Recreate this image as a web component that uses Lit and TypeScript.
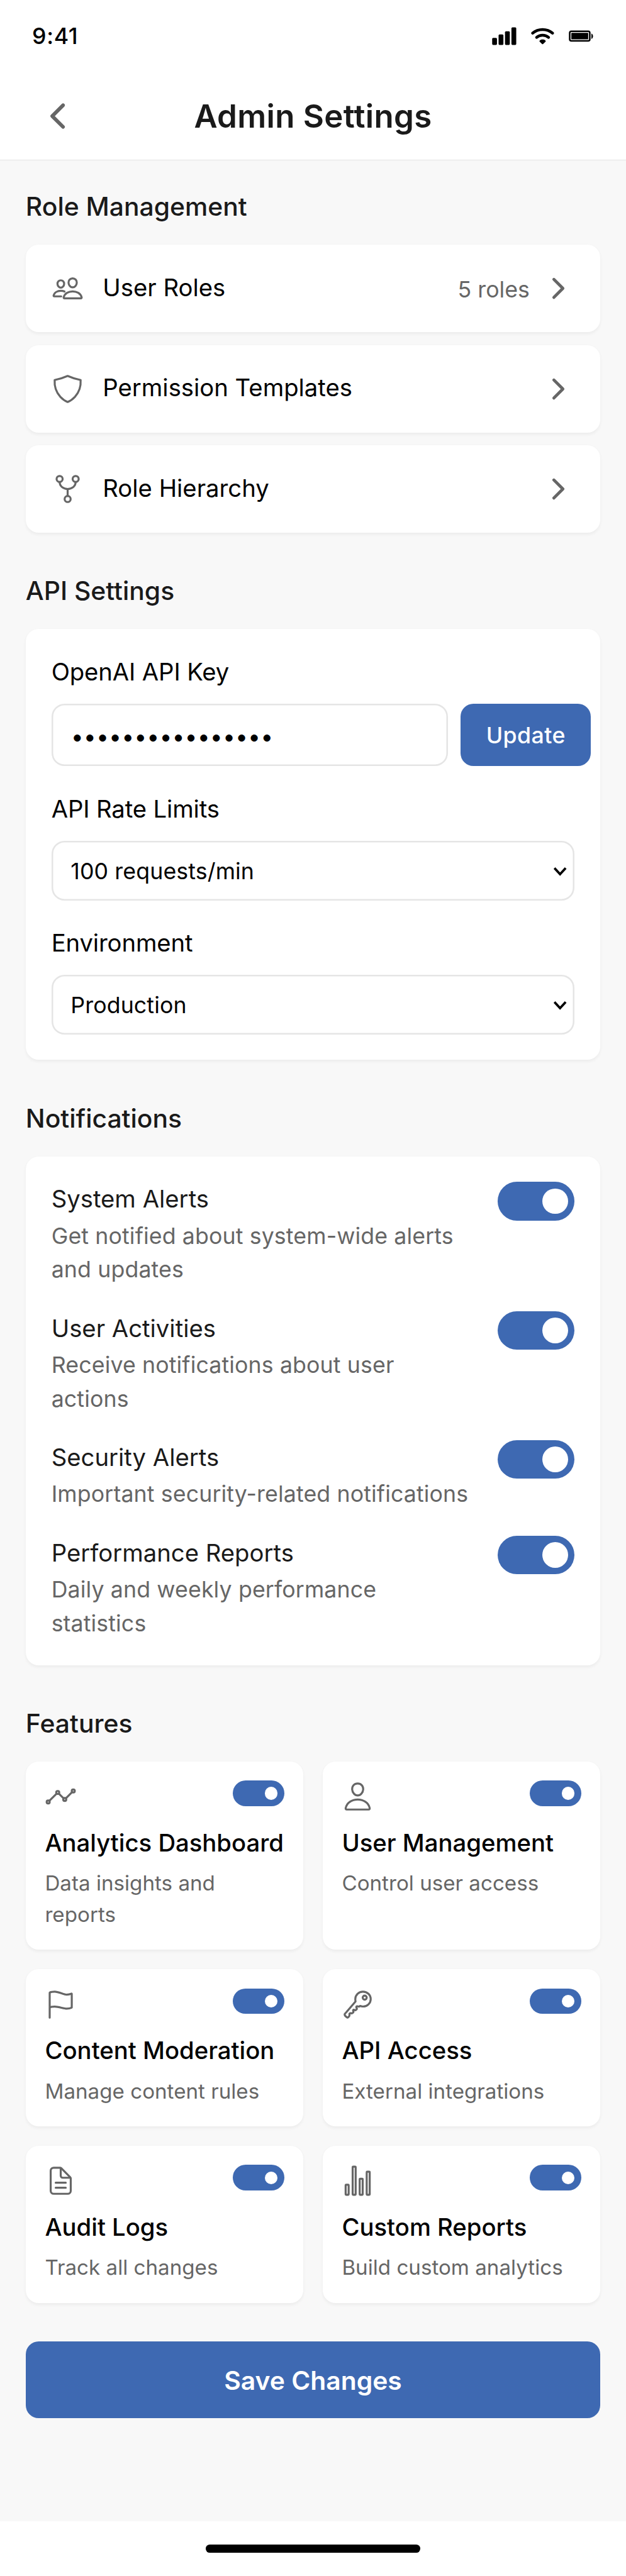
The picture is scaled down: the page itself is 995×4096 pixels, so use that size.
import { LitElement, html, svg, css, TemplateResult } from "lit";
import { customElement, property } from "lit/decorators.js";

const ICONS: Record<string, TemplateResult> = {
  back: svg`<path stroke-width="48" d="M328 112L184 256l144 144"/>`,
  forward: svg`<path stroke-width="48" d="M184 112l144 144-144 144"/>`,
  people: svg`<path d="M402 168c-2.93 40.67-33.1 72-66 72s-63.12-31.32-66-72c-3-42.31 26.37-72 66-72s69 30.46 66 72z"/><path d="M336 304c-65.17 0-127.84 32.37-143.54 95.41-2.08 8.34 3.15 16.59 11.72 16.59h263.65c8.57 0 13.77-8.25 11.72-16.59C463.85 335.36 401.18 304 336 304z"/><path d="M200 185.94c-2.34 32.48-26.72 58.06-53 58.06s-50.7-25.57-53-58.06C91.61 152.15 115.34 128 147 128s55.39 24.77 53 57.94z"/><path d="M206 306c-18.05-8.27-37.93-11.45-59-11.45-52 0-102.1 25.85-114.65 76.2-1.65 6.66 2.53 13.25 9.37 13.25H154"/>`,
  shield: svg`<path d="M463.1 112.37C373.68 96.33 336.71 84.45 256 48c-80.71 36.45-117.68 48.33-207.1 64.37C32.7 369.13 240.58 457.79 256 464c15.42-6.21 223.3-94.87 207.1-351.63z"/>`,
  network: svg`<circle cx="128" cy="96" r="48"/><circle cx="256" cy="416" r="48"/><circle cx="384" cy="96" r="48"/><path d="M128 144c0 74.67 68.92 112 128 112M384 144c0 74.67-68.92 112-128 112M256 368V256"/>`,
  analytics: svg`<path d="M344 280l88-88M232 216l64 64M80 320l104-104"/><circle cx="456" cy="168" r="24"/><circle cx="320" cy="304" r="24"/><circle cx="208" cy="192" r="24"/><circle cx="56" cy="344" r="24"/>`,
  person: svg`<path d="M344 144c-3.92 52.87-44 96-88 96s-84.15-43.12-88-96c-4-55 35-96 88-96s92 42 88 96z"/><path d="M256 304c-87 0-175.3 48-191.64 138.6C62.39 453.52 68.57 464 80 464h352c11.44 0 17.62-10.48 15.65-21.4C431.3 352 343 304 256 304z"/>`,
  flag: svg`<path d="M80 464V68.14a8 8 0 014-6.9C91.81 56.66 112.92 48 160 48c64 0 145 48 192 48a199.53 199.53 0 0077.23-15.77 2 2 0 012.77 1.85v219.36a4 4 0 01-2.39 3.65C421.37 308.7 392.33 320 352 320c-48 0-128-32-192-32s-80 16-80 16"/>`,
  key: svg`<path d="M218.1 167.17c0 13 0 25.6 4.1 37.4-43.1 50.6-156.9 184.3-167.5 194.5a20.17 20.17 0 00-6.7 15c0 8.5 5.2 16.7 9.6 21.3 6.6 6.9 34.8 33 40 28 15.4-15 18.5-19 24.8-25.2 9.5-9.3-1-28.3 2.3-36s6.8-9.2 12.5-10.4 15.8 2.9 23.7 3c8.3.1 12.8-3.4 19-9.2 5-4.6 8.6-8.9 8.7-15.6.2-9-12.8-20.9-3.1-30.4s23.7 6.2 34 5 22.8-15.5 24.1-21.6-11.7-21.8-9.7-30.7c.7-3 6.8-10 11.4-11s25 6.9 29.6 5.9c5.6-1.2 12.1-7.1 17.4-10.4 15.5 6.7 29.6 9.4 47.7 9.4 68.5 0 124-53.4 124-119.2S408.5 48 340 48s-121.9 53.37-121.9 119.17zM400 144a32 32 0 11-32-32 32 32 0 0132 32z"/>`,
  document: svg`<path d="M416 221.25V416a48 48 0 01-48 48H144a48 48 0 01-48-48V96a48 48 0 0148-48h98.75a32 32 0 0122.62 9.37l141.26 141.26a32 32 0 019.37 22.62z"/><path d="M256 56v120a32 32 0 0032 32h120M176 288h160M176 368h160"/>`,
  stats: svg`<rect x="64" y="320" width="48" height="160" rx="8"/><rect x="288" y="224" width="48" height="256" rx="8"/><rect x="400" y="112" width="48" height="368" rx="8"/><rect x="176" y="32" width="48" height="448" rx="8"/>`,
};

@customElement("line-icon")
export class LineIcon extends LitElement {
  @property() name = "";

  static styles = css`
    :host { display: block; flex: none; width: 20px; height: 20px; color: #666; }
    .glyph { display: block; width: 100%; height: 100%; fill: none; stroke: currentColor; stroke-width: 32; stroke-linecap: round; stroke-linejoin: round; }
  `;

  render() {
    return html`<svg class="glyph" viewBox="0 0 512 512">${ICONS[this.name]}</svg>`;
  }
}

@customElement("toggle-switch")
export class ToggleSwitch extends LitElement {
  @property({ type: Boolean, reflect: true }) small = false;

  static styles = css`
    :host { display: flex; flex: none; box-sizing: border-box; justify-content: flex-end; align-items: center; width: 48px; height: 24px; padding: 4px; border-radius: 12px; background: #3e69b2; }
    .knob { width: 16px; height: 16px; border-radius: 50%; background: #fff; }
    :host([small]) { width: 32px; height: 16px; border-radius: 8px; }
    :host([small]) .knob { width: 8px; height: 8px; }
  `;

  render() {
    return html`<span class="knob"></span>`;
  }
}

const ROLES = [
  { icon: "people", label: "User Roles", note: "5 roles" },
  { icon: "shield", label: "Permission Templates", note: "" },
  { icon: "network", label: "Role Hierarchy", note: "" },
];

const SELECTS = [
  { label: "API Rate Limits", value: "100 requests/min" },
  { label: "Environment", value: "Production" },
];

const NOTICES = [
  ["System Alerts", "Get notified about system-wide alerts and updates"],
  ["User Activities", "Receive notifications about user actions"],
  ["Security Alerts", "Important security-related notifications"],
  ["Performance Reports", "Daily and weekly performance statistics"],
];

const FEATURES = [
  ["analytics", "Analytics Dashboard", "Data insights and reports"],
  ["person", "User Management", "Control user access"],
  ["flag", "Content Moderation", "Manage content rules"],
  ["key", "API Access", "External integrations"],
  ["document", "Audit Logs", "Track all changes"],
  ["stats", "Custom Reports", "Build custom analytics"],
];

@customElement("app-root")
export class AppRoot extends LitElement {
  static styles = css`
    :host { display: block; background: #fff; }
    * { box-sizing: border-box; }
    .screen { zoom: 2.552; width: 389.9px; height: 1605px; display: flex; flex-direction: column; font: 400 15px/1.5 Inter, sans-serif; color: #000; background: #f8f8f8; }
    .status { display: flex; align-items: center; height: 45px; padding: 0 20px; gap: 8px; background: #fff; }
    .time { flex: 1; padding-top: 0.4px; font-size: 14px; font-weight: 500; letter-spacing: 0.25px; }
    .status-icon { display: block; width: 16px; height: 16px; }
    .header { display: grid; grid-template-columns: 56px 1fr 56px; align-items: center; height: 55.5px; padding-bottom: 1px; background: #fff; box-shadow: inset 0 -1px #f0f0f0; }
    .back { width: 24px; height: 24px; margin: 0.5px 0 0 24px; }
    .title { margin: 0.4px 0 0; text-align: center; font-size: 20px; font-weight: 600; letter-spacing: 0.12px; color: #1a1a1a; }
    .main { flex: 1; display: flex; flex-direction: column; gap: 24px; padding: 16px 16px 0; }
    .heading { margin: 0; padding: 0.4px 0 11.6px; font-size: 16px; line-height: 24px; font-weight: 500; color: #1a1a1a; }
    .card { background: #fff; border-radius: 8px; box-shadow: 0 1px 2px rgba(0, 0, 0, 0.05); }
    .roles { display: flex; flex-direction: column; gap: 8px; }
    .role { display: flex; align-items: center; height: 54.5px; padding: 0 16px; }
    .role-name { flex: 1; margin-left: 12px; padding-bottom: 0.9px; }
    .role-note { margin-right: 8px; padding-top: 1.4px; font-size: 14px; color: #666; }
    .form { display: flex; flex-direction: column; gap: 16px; padding: 16px; }
    .field { display: flex; flex-direction: column; gap: 8px; }
    .label { line-height: 22.5px; margin: -0.45px 0 0.45px; letter-spacing: -0.05px; }
    .key-row { display: flex; gap: 8px; margin-right: -10.2px; }
    .box { display: flex; align-items: center; box-shadow: inset 0 0 0 1px #e5e5e5; border-radius: 8px; font-size: 14px; letter-spacing: 0.04px; background: #fff; }
    .secret { flex: 1; height: 39px; padding: 2.4px 0 0 12.2px; letter-spacing: 0; }
    .update { display: flex; align-items: center; justify-content: center; width: 81.2px; height: 39px; padding-top: 1.2px; border-radius: 8px; background: #3e69b2; color: #fff; font-size: 14px; font-weight: 500; letter-spacing: 0.16px; }
    .select { height: 37px; padding: 1.2px 5px 0 12px; justify-content: space-between; }
    .caret { width: 8px; height: 8px; fill: none; stroke: #000; stroke-width: 1.45; }
    .notices { display: flex; flex-direction: column; gap: 16px; padding: 16px; }
    .notice { display: flex; justify-content: space-between; align-items: flex-start; }
    .notice-text { width: 262px; }
    .notice-name { color: #1a1a1a; line-height: 22.5px; margin-top: -0.45px; }
    .notice-desc { margin: 1.15px 0 -0.7px; font-size: 14px; line-height: 21px; letter-spacing: 0.045px; color: #666; }
    .features { display: grid; grid-template-columns: 1fr 1fr; gap: 12px; }
    .feature { padding: 12px; }
    .feature-head { display: flex; justify-content: space-between; align-items: flex-start; margin-bottom: 7.55px; }
    .feature-name { line-height: 22.5px; font-weight: 500; margin-bottom: 4.45px; white-space: nowrap; }
    .feature-desc { font-size: 13px; line-height: 19.5px; color: #666; }
    .save { display: flex; align-items: center; justify-content: center; height: 48px; padding-top: 0.8px; border-radius: 8px; background: #3e69b2; color: #fff; font-size: 16px; font-weight: 600; }
    .home { display: flex; align-items: center; justify-content: center; height: 34px; background: #fff; }
    .home-bar { width: 134px; height: 5px; border-radius: 2.5px; background: #000; }
  `;

  render() {
    return html`
      <div class="screen">
        <div class="status">
          <span class="time">9:41</span>
          <svg class="status-icon" viewBox="0 0 64 64">
            <rect x="2" y="36.3" width="12" height="17.7" rx="2.5"/><rect x="18" y="28" width="12" height="26" rx="2.5"/><rect x="34" y="20" width="12" height="34" rx="2.5"/><rect x="50" y="10" width="12" height="44" rx="2.5"/>
          </svg>
          <svg class="status-icon" viewBox="0 0 64 64">
            <path d="M7 24.6A39.2 39.2 0 0 1 57 24.6M17 35.2A24 24 0 0 1 47 35.2" fill="none" stroke="#000" stroke-width="7" stroke-linecap="round"/>
            <path d="M25 46.2C23.9 45 24 43.6 25.2 42.6C29 39.5 35 39.5 38.8 42.6C40 43.6 40.1 45 39 46.2L33.2 51.8Q32 52.8 30.8 51.8Z"/>
          </svg>
          <svg class="status-icon" viewBox="0 0 64 64">
            <rect x="4" y="20" width="50" height="24" rx="4" fill="none" stroke="#000" stroke-width="4"/><rect x="8" y="24" width="42" height="16" rx="1"/><path d="M58 25.3C63.3 28 63.3 36.3 58 39Z"/>
          </svg>
        </div>
        <header class="header">
          <line-icon class="back" name="back"></line-icon>
          <h1 class="title">Admin Settings</h1>
        </header>
        <main class="main">
          <section>
            <h2 class="heading">Role Management</h2>
            <div class="roles">
              ${ROLES.map((r) => html`
                <div class="card role">
                  <line-icon name=${r.icon}></line-icon>
                  <span class="role-name">${r.label}</span>
                  ${r.note ? html`<span class="role-note">${r.note}</span>` : ""}
                  <line-icon name="forward"></line-icon>
                </div>`)}
            </div>
          </section>
          <section>
            <h2 class="heading">API Settings</h2>
            <div class="card form">
              <div class="field">
                <span class="label">OpenAI API Key</span>
                <div class="key-row">
                  <span class="box secret">••••••••••••••••</span>
                  <span class="update">Update</span>
                </div>
              </div>
              ${SELECTS.map((s) => html`
                <div class="field">
                  <span class="label">${s.label}</span>
                  <div class="box select">
                    ${s.value}
                    <svg class="caret" viewBox="0 0 8 8"><path d="M.5 1.7L4 5.5L7.5 1.7"/></svg>
                  </div>
                </div>`)}
            </div>
          </section>
          <section>
            <h2 class="heading">Notifications</h2>
            <div class="card notices">
              ${NOTICES.map(([name, desc]) => html`
                <div class="notice">
                  <div class="notice-text">
                    <div class="notice-name">${name}</div>
                    <div class="notice-desc">${desc}</div>
                  </div>
                  <toggle-switch></toggle-switch>
                </div>`)}
            </div>
          </section>
          <section>
            <h2 class="heading">Features</h2>
            <div class="features">
              ${FEATURES.map(([icon, name, desc]) => html`
                <div class="card feature">
                  <div class="feature-head">
                    <line-icon name=${icon}></line-icon>
                    <toggle-switch small></toggle-switch>
                  </div>
                  <div class="feature-name">${name}</div>
                  <div class="feature-desc">${desc}</div>
                </div>`)}
            </div>
          </section>
          <div class="save">Save Changes</div>
        </main>
        <footer class="home"><div class="home-bar"></div></footer>
      </div>
    `;
  }
}
